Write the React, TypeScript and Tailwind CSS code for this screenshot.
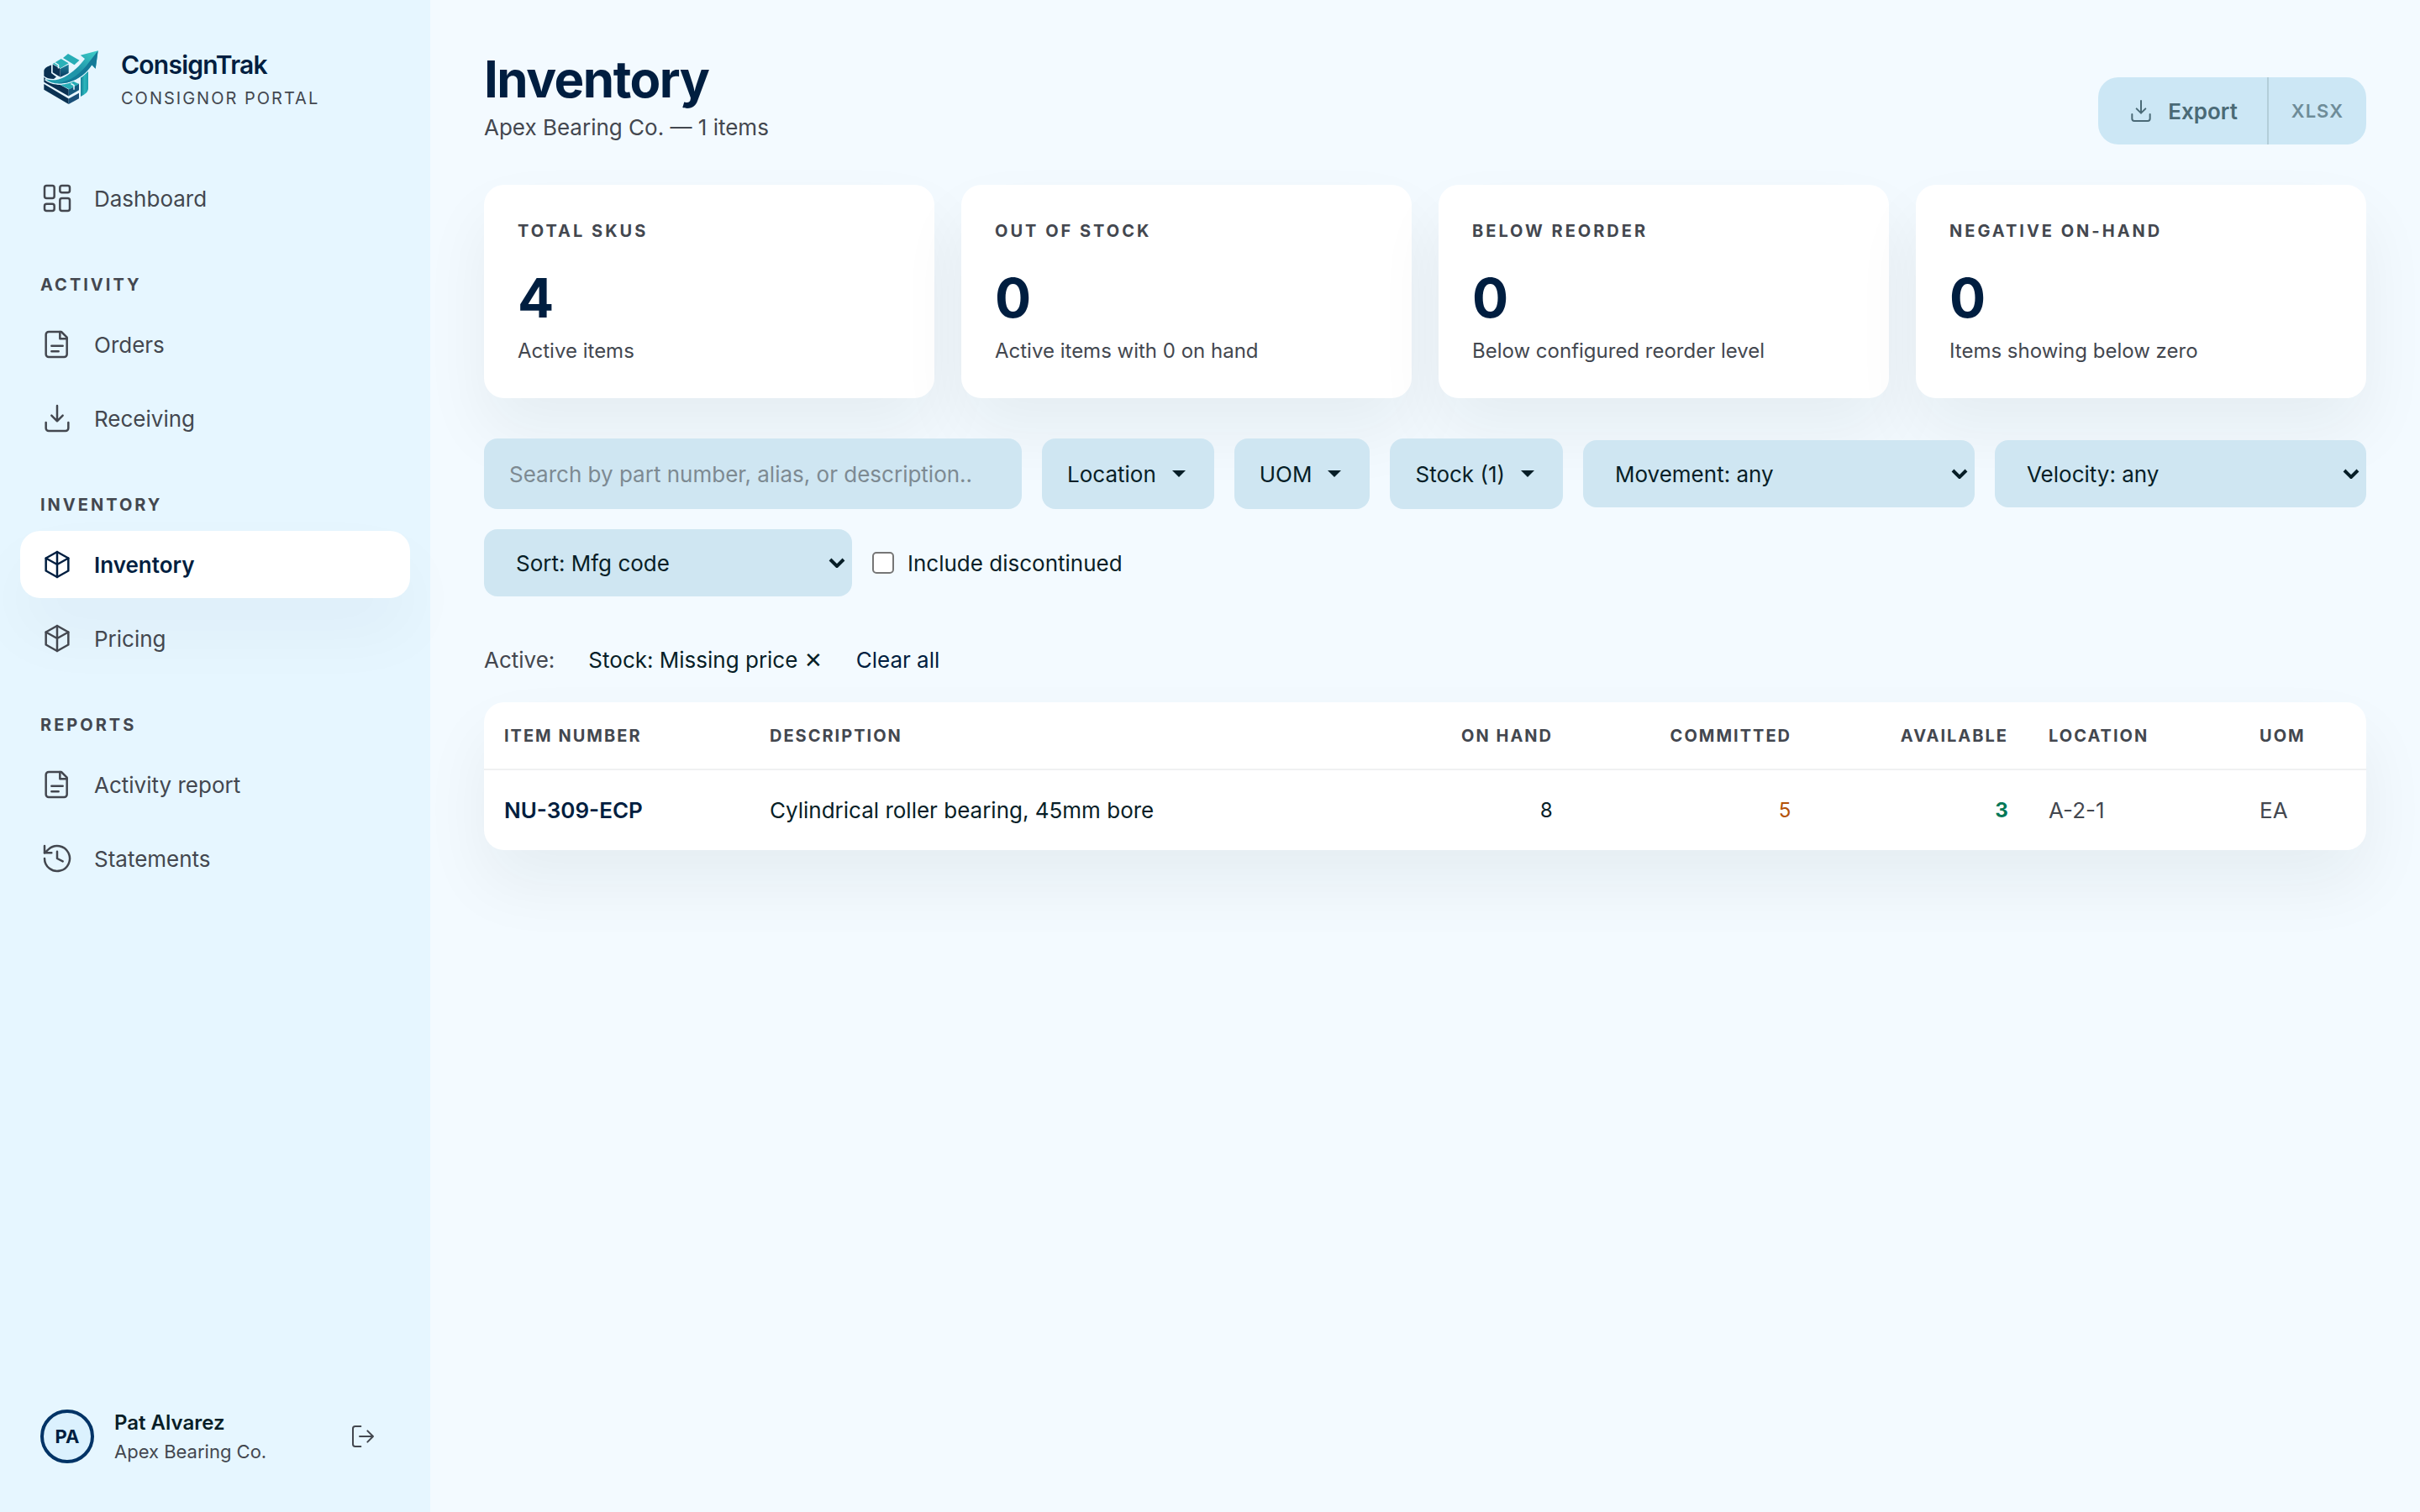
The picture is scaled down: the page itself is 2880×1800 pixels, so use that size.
import React, { useState } from 'react';

type IconName = 'dashboard' | 'file' | 'download' | 'box' | 'history' | 'logout';

type NavItem = {
    label: string;
    icon: IconName;
};

type NavSection = {
    title?: string;
    items: NavItem[];
};

type InventoryRow = {
    itemNumber: string;
    description: string;
    onHand: number;
    committed: number;
    available: number;
    location: string;
    uom: string;
};

const NAV: NavSection[] = [
    { items: [{ label: 'Dashboard', icon: 'dashboard' }] },
    {
        title: 'Activity',
        items: [
            { label: 'Orders', icon: 'file' },
            { label: 'Receiving', icon: 'download' },
        ],
    },
    {
        title: 'Inventory',
        items: [
            { label: 'Inventory', icon: 'box' },
            { label: 'Pricing', icon: 'box' },
        ],
    },
    {
        title: 'Reports',
        items: [
            { label: 'Activity report', icon: 'file' },
            { label: 'Statements', icon: 'history' },
        ],
    },
];

const STATS = [
    { label: 'Total SKUs', value: 4, hint: 'Active items' },
    { label: 'Out of stock', value: 0, hint: 'Active items with 0 on hand' },
    { label: 'Below reorder', value: 0, hint: 'Below configured reorder level' },
    { label: 'Negative on-hand', value: 0, hint: 'Items showing below zero' },
];

const ROWS: InventoryRow[] = [
    {
        itemNumber: 'NU-309-ECP',
        description: 'Cylindrical roller bearing, 45mm bore',
        onHand: 8,
        committed: 5,
        available: 3,
        location: 'A-2-1',
        uom: 'EA',
    },
];

const Icon: React.FC<{ name: IconName; className?: string }> = ({ name, className = 'size-10' }) => (
    <svg
        className={`shrink-0 ${className}`}
        viewBox="0 0 24 24"
        fill="none"
        stroke="currentColor"
        strokeWidth={1.5}
        strokeLinecap="round"
        strokeLinejoin="round"
        aria-hidden="true"
    >
        {name === 'dashboard' && (
            <>
                <rect x="3" y="3" width="7" height="9" rx="1.5" />
                <rect x="14" y="3" width="7" height="5" rx="1.5" />
                <rect x="14" y="12" width="7" height="9" rx="1.5" />
                <rect x="3" y="16" width="7" height="5" rx="1.5" />
            </>
        )}
        {name === 'file' && (
            <>
                <path d="M6 3h9l4 4v12a2 2 0 0 1-2 2H6a2 2 0 0 1-2-2V5a2 2 0 0 1 2-2z" />
                <path d="M14 3v5h5M8 13h8M8 17h5" />
            </>
        )}
        {name === 'download' && (
            <>
                <path d="M12 3v11M8 10l4 4 4-4" />
                <path d="M4 15v4a2 2 0 0 0 2 2h12a2 2 0 0 0 2-2v-4" />
            </>
        )}
        {name === 'box' && (
            <>
                <path d="M12 3l8 4.5v9L12 21l-8-4.5v-9z" />
                <path d="M4 7.5l8 4.5 8-4.5M12 3v18" />
            </>
        )}
        {name === 'history' && (
            <>
                <path d="M3 12a9 9 0 1 0 3-6.7L3 8" />
                <path d="M3 3v5h5M12 7v5l4 2" />
            </>
        )}
        {name === 'logout' && (
            <>
                <path d="M10 3H5a2 2 0 0 0-2 2v14a2 2 0 0 0 2 2h5" />
                <path d="M9 12h12M16 7l5 5-5 5" />
            </>
        )}
    </svg>
);

const Logo = () => (
    <svg className="size-18 shrink-0" viewBox="0 0 72 72" role="img" aria-label="ConsignTrak logo">
        <defs>
            <linearGradient id="arrow" x1="0" y1="1" x2="1" y2="0">
                <stop offset="0" stopColor="#1f9fae" />
                <stop offset="0.5" stopColor="#1f93a8" />
                <stop offset="1" stopColor="#3fd0c9" />
            </linearGradient>
            <linearGradient id="side" x1="0" y1="0" x2="1" y2="0">
                <stop offset="0" stopColor="#147f97" />
                <stop offset="0.5" stopColor="#2bb5bb" />
                <stop offset="1" stopColor="#1e9dab" />
            </linearGradient>
            <linearGradient id="face" x1="0" y1="0" x2="0" y2="1">
                <stop offset="0" stopColor="#1a7f9a" />
                <stop offset="1" stopColor="#0c3a60" />
            </linearGradient>
        </defs>

        {/* back plate and lid */}
        <path d="M13 21.5v9.5l6 4.5-3 2.5c-5 0-9-1-11.700-3.500v-6.500c1-3.500 4.500-5 8.700-6.500z" fill="#0a3152" />
        <path d="M27 13l6-5 13.500 7.700-6 5.600z" fill="#27adb6" />

        {/* upper carton */}
        <path d="M14.700 20.500l9 5.200v10l-9-5.500z" fill="#0a3152" />
        <path d="M24 25.700l9.700-5v10.600l-9.700 4.400z" fill="url(#face)" />
        <path d="M14.700 20l10-6 9 5.200-9.700 6z" fill="#29b1b8" />
        <path d="M17 18.500l4.500 3v4" fill="none" stroke="#e6f6ff" strokeWidth="1.500" />

        {/* lower stack */}
        <path d="M4.300 35.700c5 5 11 8 19.400 9.300l10 5.500v8L4.300 41.700z" fill="#0a3152" />
        <path d="M33.700 50.500L46 43.500v7.800l-12.300 7z" fill="#155a7e" />
        <path d="M23.700 45l15-4.500 7.300 3.500-11.500 6.200z" fill="#27adb6" />
        <path d="M36.500 43.500l3.500 2.200v5" fill="none" stroke="#e6f6ff" strokeWidth="1.500" />
        <path d="M4.300 44l29.400 17.500V68L4.300 50.700z" fill="#0a3152" />
        <path d="M33.700 61.500L46 54.700v6.600L33.700 68z" fill="#194f78" />
        <path d="M48 35.700l9-7.700v21c0 4-3 7-9 10z" fill="url(#side)" />

        {/* arrow */}
        <path
            d="M6 38.300c8 2 16 1 22.700-2.600C39 30 47 22 53 14l-5.300-4.300L68.700 4.300l-3 21.400-4.400-4.400C55 31 46 38 35 41.500 24 45 13 44 6 38.300z"
            fill="#e6f6ff"
            stroke="#e6f6ff"
            strokeWidth="2.400"
        />
        <path
            d="M6 38.300c8 2 16 1 22.700-2.600C39 30 47 22 53 14l-5.300-4.300L68.700 4.300l-3 21.400-4.400-4.400C55 31 46 38 35 41.500 24 45 13 44 6 38.300z"
            fill="url(#arrow)"
        />
        <path
            d="M68.700 4.300l-3 21.400-4.400-4.400C55 31 46 38 35 41.500c-5 1.600-10 2-15 1.500 16-2 29-12 38-25z"
            fill="#147a98"
        />
    </svg>
);

const Sidebar = () => (
    <aside className="flex w-[512px] shrink-0 flex-col bg-[#e6f6ff] px-6 pt-14 pb-14">
        <div className="flex items-start gap-6 px-6">
            <Logo />
            <div>
                <p className="text-[30px] leading-[42px] font-semibold tracking-tight text-[#001e40]">ConsignTrak</p>
                <p className="text-[20px] leading-[38px] tracking-[2px] uppercase">Consignor Portal</p>
            </div>
        </div>

        <nav className="mt-15 flex flex-col gap-2">
            {NAV.map((section, i) => (
                <React.Fragment key={section.title ?? i}>
                    {section.title && (
                        <h2 className="mt-10 mb-2 px-6 text-[20px] leading-[30px] font-bold tracking-[3px] uppercase">
                            {section.title}
                        </h2>
                    )}
                    {section.items.map(item => {
                        const active = item.label === 'Inventory';
                        return (
                            <a
                                key={item.label}
                                href={`#${item.label.toLowerCase().replace(' ', '-')}`}
                                aria-current={active ? 'page' : undefined}
                                className={`flex h-20 items-center gap-6 rounded-3xl px-6 text-[26px] ${
                                    active
                                        ? 'bg-white font-semibold text-[#001e40] shadow-[0_40px_80px_rgba(7,30,39,0.04)]'
                                        : ''
                                }`}
                            >
                                <Icon name={item.icon} />
                                {item.label}
                            </a>
                        );
                    })}
                </React.Fragment>
            ))}
        </nav>

        <div className="mt-auto flex items-center gap-6 px-6">
            <div className="flex size-16 items-center justify-center rounded-full border-4 border-[#003366] bg-[#dbf1fe] text-[22px] font-bold text-[#001e40]">
                PA
            </div>
            <div className="flex-1">
                <p className="text-[24px] leading-9 font-semibold text-[#071e27]">Pat Alvarez</p>
                <p className="text-[22px] leading-8">Apex Bearing Co.</p>
            </div>
            <button type="button" aria-label="Sign out" className="p-4">
                <Icon name="logout" className="size-8" />
            </button>
        </div>
    </aside>
);

const FilterButton: React.FC<{ label: string }> = ({ label }) => (
    <button
        type="button"
        aria-haspopup="listbox"
        className="flex h-21 items-center gap-[15px] rounded-2xl bg-[#cfe6f2] px-[30px] text-[26px] text-[#071e27]"
    >
        {label}
        <svg className="size-6" viewBox="0 0 24 24" fill="currentColor" aria-hidden="true">
            <path d="M4 8h16l-8 8z" />
        </svg>
    </button>
);

const FilterSelect: React.FC<{ label: string; value: string; className: string }> = ({ label, value, className }) => (
    <div className={`relative ${className}`}>
        <select
            aria-label={label}
            className="h-20 w-full appearance-none rounded-2xl bg-[#cfe6f2] px-[38px] text-[26px] text-[#071e27]"
        >
            <option>{`${label}: ${value}`}</option>
        </select>
        <svg
            className="pointer-events-none absolute top-1/2 right-2 h-3 w-5 -translate-y-1/2 text-[#071e27]"
            viewBox="0 0 20 12"
            fill="none"
            stroke="currentColor"
            strokeWidth={4}
            aria-hidden="true"
        >
            <path d="M2 2l8 8 8-8" />
        </svg>
    </div>
);

const App = () => {
    const [discontinued, setDiscontinued] = useState(false);

    return (
        <div className="flex min-h-screen bg-[#f3faff] font-[Inter,sans-serif] text-[#43474f]">
            <Sidebar />

            <main className="min-w-0 flex-1 px-16 pt-14">
                <header className="flex items-end justify-between">
                    <div>
                        <h1 className="text-[60px] leading-[76px] font-bold tracking-tight text-[#001e40]">Inventory</h1>
                        <p className="text-[26px] leading-10">Apex Bearing Co. — 1 items</p>
                    </div>
                    <button
                        type="button"
                        className="flex h-20 items-stretch overflow-hidden rounded-3xl bg-[#cce7f5] text-[#4a6a76]"
                    >
                        <span className="flex items-center gap-4 px-[35px] text-[26px] font-semibold">
                            <Icon name="download" className="size-8" />
                            Export
                        </span>
                        <span className="flex items-center border-l-2 border-[#b3ced9] px-[27px] text-[22px] font-semibold tracking-[1px] text-[#6e8c98]">
                            XLSX
                        </span>
                    </button>
                </header>

                <section className="mt-12 grid grid-cols-4 gap-8">
                    {STATS.map(stat => (
                        <div
                            key={stat.label}
                            className="rounded-3xl bg-white px-10 pt-10 pb-[38px] shadow-[0_40px_80px_rgba(7,30,39,0.06)]"
                        >
                            <p className="text-[20px] leading-[30px] font-bold tracking-[3px] uppercase">{stat.label}</p>
                            <p className="mt-8 text-[64px] leading-[66px] font-bold text-[#001e40]">{stat.value}</p>
                            <p className="mt-3 text-[24px] leading-9">{stat.hint}</p>
                        </div>
                    ))}
                </section>

                <section className="relative mt-12 flex flex-wrap items-center gap-6" aria-label="Filters">
                    <input
                        type="search"
                        aria-label="Search inventory"
                        placeholder="Search by part number, alias, or description.."
                        className="h-21 w-[640px] rounded-2xl bg-[#cfe6f2] px-[30px] text-[26px] text-[#071e27] placeholder:text-[#7d8a92]"
                    />
                    <FilterButton label="Location" />
                    <FilterButton label="UOM" />
                    <FilterButton label="Stock (1)" />
                    <FilterSelect label="Movement" value="any" className="w-[466px]" />
                    <FilterSelect label="Velocity" value="any" className="w-[430px] grow" />
                    <FilterSelect label="Sort" value="Mfg code" className="w-[438px]" />
                    <label className="flex items-center gap-4 text-[26px] text-[#071e27]">
                        <input
                            type="checkbox"
                            checked={discontinued}
                            onChange={e => setDiscontinued(e.target.checked)}
                            className="size-[26px] appearance-none rounded-[5px] border-2 border-[#767676] bg-white checked:bg-[#003366]"
                        />
                        Include discontinued
                    </label>
                </section>

                <div className="mt-12 flex h-[54px] items-center text-[26px]">
                    <span>Active:</span>
                    <button type="button" className="ml-10 text-[#071e27]">
                        Stock: Missing price ✕
                    </button>
                    <button type="button" className="ml-10 text-[#001e40]">
                        Clear all
                    </button>
                </div>

                <div className="mt-6 overflow-hidden rounded-3xl bg-white shadow-[0_40px_80px_rgba(7,30,39,0.06)]">
                    <table className="w-full table-fixed text-left text-[26px]">
                        <thead>
                            <tr className="h-20 border-b-2 border-[#f0f1f2] text-[20px] tracking-[2px] uppercase">
                                <th className="w-[316px] px-6 font-bold">Item number</th>
                                <th className="px-6 font-bold">Description</th>
                                <th className="w-[238px] px-6 text-right font-bold">On hand</th>
                                <th className="w-[284px] px-6 text-right font-bold">Committed</th>
                                <th className="w-[258px] px-6 text-right font-bold">Available</th>
                                <th className="w-[251px] px-6 font-bold">Location</th>
                                <th className="w-[151px] px-6 font-bold">UOM</th>
                            </tr>
                        </thead>
                        <tbody>
                            {ROWS.map(row => (
                                <tr key={row.itemNumber} className="h-24">
                                    <td className="px-6 font-semibold text-[#001e40]">{row.itemNumber}</td>
                                    <td className="px-6 text-[#071e27]">{row.description}</td>
                                    <td className="px-6 text-right text-[24px] text-[#071e27] tabular-nums">{row.onHand}</td>
                                    <td className="px-6 text-right text-[24px] text-[#b45309] tabular-nums">{row.committed}</td>
                                    <td className="px-6 text-right text-[24px] font-bold text-[#047857] tabular-nums">
                                        {row.available}
                                    </td>
                                    <td className="px-6">{row.location}</td>
                                    <td className="px-6">{row.uom}</td>
                                </tr>
                            ))}
                        </tbody>
                    </table>
                </div>
            </main>
        </div>
    );
};

export default App;
